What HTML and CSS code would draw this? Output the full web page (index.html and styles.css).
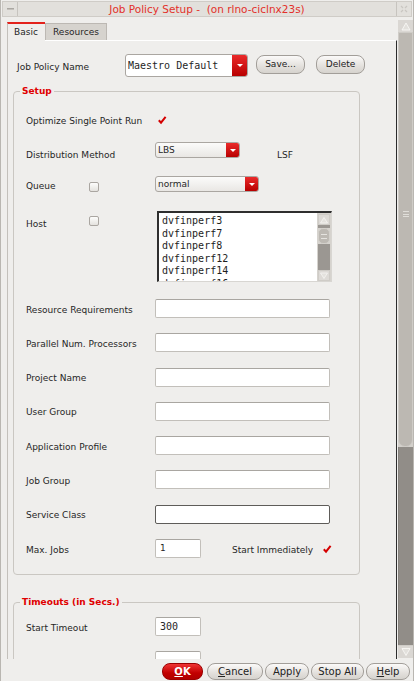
FILE: index.html
```html
<!DOCTYPE html>
<html>
<head>
<meta charset="utf-8">
<link rel="stylesheet" href="styles.css">
</head>
<body>
<div class="window">
  <div class="titlebar">
    <span class="tb-btn"><span class="tb-dash"></span></span>
    <span class="title">Job Policy Setup -  (on rlno-ciclnx23s)</span>
    <span class="tb-btn">
      <svg width="12" height="12" viewBox="0 0 12 12"><path d="M3 3l2 2M9 3l-2 2M3 9l2-2M9 9l-2-2" stroke="#c9c6c1" stroke-width="1.2" fill="none"/></svg>
    </span>
  </div>
  <div class="body">
    <div class="left">
      <div class="tabs">
        <div class="tab active">Basic</div>
        <div class="tab">Resources</div>
      </div>
      <div class="panel">
        <div class="namerow">
          <span class="namelbl">Job Policy Name</span>
          <div class="combo wide mono"><span class="combo-text">Maestro Default</span><span class="combo-btn"><i></i></span></div>
          <span class="btn save">Save...</span>
          <span class="btn delete">Delete</span>
        </div>

        <div class="group setup">
          <span class="legend">Setup</span>
          <div class="row r1">
            <span class="lbl lbl-opt">Optimize Single Point Run</span>
            <span class="check on"><svg width="10" height="10" viewBox="0 0 10 10"><path d="M1.8 5.2L4 7.6L8.6 1.8" stroke="#d40000" stroke-width="2" fill="none"/></svg></span>
          </div>
          <div class="row r2">
            <span class="lbl">Distribution Method</span>
            <div class="combo lbs"><span class="combo-text">LBS</span><span class="combo-btn"><i></i></span></div>
            <span class="lsf">LSF</span>
          </div>
          <div class="row r3">
            <span class="lbl lbl-short">Queue</span>
            <span class="check off q-check"></span>
            <div class="combo normal"><span class="combo-text">normal</span><span class="combo-btn"><i></i></span></div>
          </div>
          <div class="row r4">
            <span class="lbl lbl-short host-lbl">Host</span>
            <span class="check off host-check"></span>
            <div class="listbox">
              <div class="list-items mono">
                <div>dvfinperf3</div>
                <div>dvfinperf7</div>
                <div>dvfinperf8</div>
                <div>dvfinperf12</div>
                <div>dvfinperf14</div>
                <div>dvfinperf16</div>
              </div>
              <div class="lscroll">
                <span class="larrow"><svg width="10" height="8" viewBox="0 0 10 8"><path d="M1.5 7L5 1.5L8.5 7Z" fill="#e4e2de" stroke="#f6f5f3" stroke-width="0.8"/></svg></span>
                <span class="lgap"></span>
                <span class="lthumb"><span class="grip"></span></span>
                <span class="ltrack"></span>
                <span class="larrow"><svg width="10" height="8" viewBox="0 0 10 8"><path d="M1.5 1L5 6.5L8.5 1Z" fill="#e4e2de" stroke="#f6f5f3" stroke-width="0.8"/></svg></span>
              </div>
            </div>
          </div>
          <div class="row irow first"><span class="lbl">Resource Requirements</span><span class="input"></span></div>
          <div class="row irow"><span class="lbl">Parallel Num. Processors</span><span class="input"></span></div>
          <div class="row irow"><span class="lbl">Project Name</span><span class="input"></span></div>
          <div class="row irow"><span class="lbl">User Group</span><span class="input"></span></div>
          <div class="row irow"><span class="lbl">Application Profile</span><span class="input"></span></div>
          <div class="row irow"><span class="lbl">Job Group</span><span class="input"></span></div>
          <div class="row irow"><span class="lbl">Service Class</span><span class="input focus"></span></div>
          <div class="row irow">
            <span class="lbl">Max. Jobs</span>
            <span class="input small">1</span>
            <span class="start-lbl">Start Immediately</span>
            <span class="check on"><svg width="10" height="10" viewBox="0 0 10 10"><path d="M1.8 5.2L4 7.6L8.6 1.8" stroke="#d40000" stroke-width="2" fill="none"/></svg></span>
          </div>
        </div>

        <div class="group timeouts">
          <span class="legend">Timeouts (in Secs.)</span>
          <div class="row irow tfirst"><span class="lbl">Start Timeout</span><span class="input small mono">300</span></div>
          <div class="row irow"><span class="lbl"></span><span class="input small"></span></div>
        </div>
      </div>
    </div>
    <div class="vscroll">
      <span class="varrow"><svg width="12" height="10" viewBox="0 0 12 10"><path d="M2 9L6 2L10 9Z" fill="#e2e0dc" stroke="#f8f7f5" stroke-width="0.9"/></svg></span>
      <span class="vthumb"><span class="vgrip"></span></span>
      <span class="vtrack"></span>
      <span class="varrow down"><svg width="12" height="10" viewBox="0 0 12 10"><path d="M2 1.5L6 8.5L10 1.5Z" fill="#e2e0dc" stroke="#f8f7f5" stroke-width="0.9"/></svg></span>
    </div>
  </div>
  <div class="buttonbar">
    <span class="btn bb ok"><u>O</u>K</span>
    <span class="btn bb cancel"><u>C</u>ancel</span>
    <span class="btn bb apply">Apply</span>
    <span class="btn bb stop">Stop All</span>
    <span class="btn bb help"><u>H</u>elp</span>
  </div>
</div>
</body>
</html>
```

FILE: styles.css
```css
* { box-sizing: border-box; }
body {
  margin: 0;
  background: #efeeec;
  font-family: "DejaVu Sans", sans-serif;
  font-size: 9px;
  color: #262626;
}
.mono { font-family: "DejaVu Sans Mono", monospace; font-size: 10px; }

.window {
  width: 414px;
  height: 681px;
  border-left: 1px solid #b9b6b1;
  border-right: 1px solid #b9b6b1;
  display: flex;
  flex-direction: column;
  overflow: hidden;
  background: #efeeec;
}

/* title bar */
.titlebar {
  height: 16px;
  margin: 1px 1px 0 1px;
  display: flex;
  align-items: center;
  background: #e2e0dc;
  border: 1px solid #cfccc7;
  flex: none;
}
.tb-btn {
  width: 15px;
  height: 14px;
  border-right: 1px solid #c7c4bf;
  display: flex;
  align-items: center;
  justify-content: center;
  flex: none;
}
.tb-btn:last-child { border-right: none; border-left: 1px solid #c7c4bf; }
.tb-dash { width: 7px; height: 2px; background: #c4c1bc; border-top: 1px solid #aaa7a2; }
.title {
  flex: 1;
  text-align: center;
  color: #e3302a;
  font-size: 10.5px;
  white-space: pre;
  line-height: 14px;
}

/* body */
.body {
  display: flex;
  height: 640px;
  margin-top: 2px;
  flex: none;
}
.left {
  width: 390px;
  margin-left: 6px;
  padding-top: 3px;
  display: flex;
  flex-direction: column;
}
.tabs { display: flex; align-items: flex-end; height: 18px; flex: none; position: relative; z-index: 1; }
.tab {
  height: 17px;
  width: 62px;
  padding-left: 7px;
  line-height: 16px;
  background: #d6d3ce;
  border: 1px solid #bcb8b3;
  border-bottom: none;
}
.tab.active {
  width: 38px;
  height: 19px;
  margin-bottom: -1px;
  padding-left: 6px;
  background: #efeeec;
  border: none;
  border-left: 1px solid #c3c0bb;
  border-top: 2px solid #e3221c;
  line-height: 16px;
}
.panel {
  flex: 1;
  border-top: 1px solid #ffffff;
  border-left: 1px solid #c3c0bb;
  border-right: 1px solid #2c2c2c;
  overflow: hidden;
}

/* name row */
.namerow {
  display: flex;
  align-items: center;
  height: 23px;
  margin-top: 13px;
  padding-left: 9px;
}
.namelbl { width: 108px; padding-top: 2px; }
.combo {
  display: flex;
  height: 16px;
  background: #fff;
  border: 1px solid #aaa6a1;
  border-radius: 3px;
  overflow: hidden;
}
.combo.wide { width: 123px; height: 23px; }
.combo-text { flex: 1; padding-left: 2px; line-height: 14px; white-space: pre; }
.combo.wide .combo-text { line-height: 22px; padding-left: 2px; }
.combo-btn {
  width: 13px;
  background: linear-gradient(#ea2a2a, #b80000);
  display: flex;
  align-items: center;
  justify-content: center;
}
.combo.wide .combo-btn { width: 15px; }
.combo-btn i {
  width: 0; height: 0;
  border-left: 3px solid transparent;
  border-right: 3px solid transparent;
  border-top: 3px solid #ffffff;
}
.combo.lbs, .combo.normal {
  background: linear-gradient(#fbfbfa, #e9e7e4);
  align-self: flex-start;
}
.combo.lbs { width: 85px; margin-top: -3px; }
.combo.normal { width: 104px; margin-top: 0; }

.btn {
  display: inline-flex;
  align-items: center;
  justify-content: center;
  height: 19px;
  border: 1px solid #a29e99;
  border-radius: 8px;
  background: linear-gradient(#fbfaf9, #e3e0dc 60%, #d6d3ce);
  color: #222;
}
.btn.save { width: 49px; margin-left: 8px; margin-bottom: 3px; }
.btn.delete { width: 49px; margin-left: 11px; margin-bottom: 3px; }

/* groups */
.group {
  position: relative;
  width: 347px;
  margin-left: 5px;
  border: 1px solid #cac7c2;
  border-radius: 4px;
  padding-left: 12px;
}
.group.setup { margin-top: 14px; padding-top: 19px; padding-bottom: 16px; }
.group.timeouts { margin-top: 27px; padding-top: 14px; height: 80px; }
.legend {
  position: absolute;
  top: -7px;
  left: 6px;
  padding: 0 2px;
  background: #efeeec;
  color: #e00000;
  font-weight: bold;
  line-height: 12px;
}
.row { display: flex; align-items: center; }
.lbl { width: 129px; flex: none; padding-top: 2px; }
.lbl-opt { width: 131px; }
.lbl-short { width: 63px; }
.r1 { height: 18px; }
.r2 { height: 18px; margin-top: 16px; }
.r3 { height: 18px; margin-top: 13px; }
.r4 { height: 71px; margin-top: 17px; align-items: flex-start; }
.q-check { margin-top: 3px; }
.host-lbl { margin-top: 6px; }
.host-check { margin-top: 5px; }
.lsf { margin-left: 37px; padding-top: 2px; }

.check {
  width: 10px;
  height: 10px;
  flex: none;
  display: inline-flex;
  align-items: center;
  justify-content: center;
}
.check.off {
  border: 1px solid #aaa6a1;
  border-radius: 2px;
  background: linear-gradient(#fdfdfc, #e4e2de);
  margin-right: 56px;
}

.listbox {
  margin-left: 2px;
  width: 175px;
  height: 71px;
  background: #fff;
  border-top: 2px solid #2e2e2e;
  border-left: 2px solid #2e2e2e;
  border-right: 1px solid #d8d6d2;
  border-bottom: 1px solid #d8d6d2;
  display: flex;
  overflow: hidden;
}
.list-items {
  flex: 1;
  padding: 2px 0 0 3px;
  line-height: 12.5px;
  color: #1e1e1e;
}
.lscroll {
  width: 14px;
  display: flex;
  flex-direction: column;
  background: #d6d3ce;
  padding: 1px 1px 0 1px;
}
.larrow {
  height: 11px;
  background: #dddad6;
  display: flex;
  align-items: center;
  justify-content: center;
  border: 1px solid #cfccc7;
  flex: none;
}
.lgap { height: 3px; background: #9b9792; flex: none; }
.lthumb {
  height: 16px;
  background: #bdb9b3;
  border-radius: 5px;
  border: 1px solid #d3d0cb;
  display: flex;
  align-items: center;
  justify-content: center;
  flex: none;
}
.grip { width: 6px; height: 5px; border-top: 1px solid #e5e3df; border-bottom: 1px solid #e5e3df; }
.ltrack { flex: 1; background: #9b9792; }

.irow { height: 19px; margin-top: 15.3px; }
.irow.first { margin-top: 17px; }
.irow.tfirst { margin-top: 0; }
.input {
  width: 175px;
  height: 19px;
  background: #fff;
  border: 1px solid #c2bfba;
  border-top-color: #a9a6a1;
  border-radius: 2px;
  padding-left: 4px;
  line-height: 17px;
}
.input.focus { border-color: #5e5c59; }
.input.small { width: 46px; }
.start-lbl { margin-left: 31px; margin-right: 9px; padding-top: 2px; }

/* right scrollbar */
.vscroll {
  width: 15px;
  margin-left: 1px;
  margin-top: 1px;
  height: 638px;
  display: flex;
  flex-direction: column;
  background: #d3d0cb;
}
.varrow {
  height: 12px;
  background: #dad7d3;
  display: flex;
  align-items: center;
  justify-content: center;
  flex: none;
}
.varrow.down { height: 13px; border-top: 1px solid #cfccc7; }
.vthumb {
  height: 415px;
  background: #bcb8b2;
  border: 1px solid #cfccc7;
  border-radius: 0 0 7px 7px;
  display: flex;
  justify-content: center;
  padding-top: 178px;
  flex: none;
}
.vgrip { width: 6px; height: 6px; border-top: 1px solid #e0ded9; border-bottom: 1px solid #e0ded9; position: relative; }
.vgrip::after { content: ""; position: absolute; left: 0; right: 0; top: 2px; border-top: 1px solid #e0ded9; }
.vtrack { flex: 1; background: #918d88; border-left: 1px solid #85817c; }

/* button bar */
.buttonbar {
  height: 22px;
  display: flex;
  justify-content: flex-end;
  align-items: center;
  gap: 2px;
  padding-right: 3px;
  flex: none;
  margin-top: 1px;
}
.btn.bb { height: 17px; font-size: 10px; }
.btn.ok {
  width: 41px;
  background: linear-gradient(#ef3434, #c20000 60%, #b00000);
  border-color: #9a0000;
  color: #fff;
  font-weight: bold;
  margin-right: 2px;
}
.btn.cancel { width: 56px; }
.btn.apply { width: 44px; }
.btn.stop { width: 53px; }
.btn.help { width: 44px; }
```
